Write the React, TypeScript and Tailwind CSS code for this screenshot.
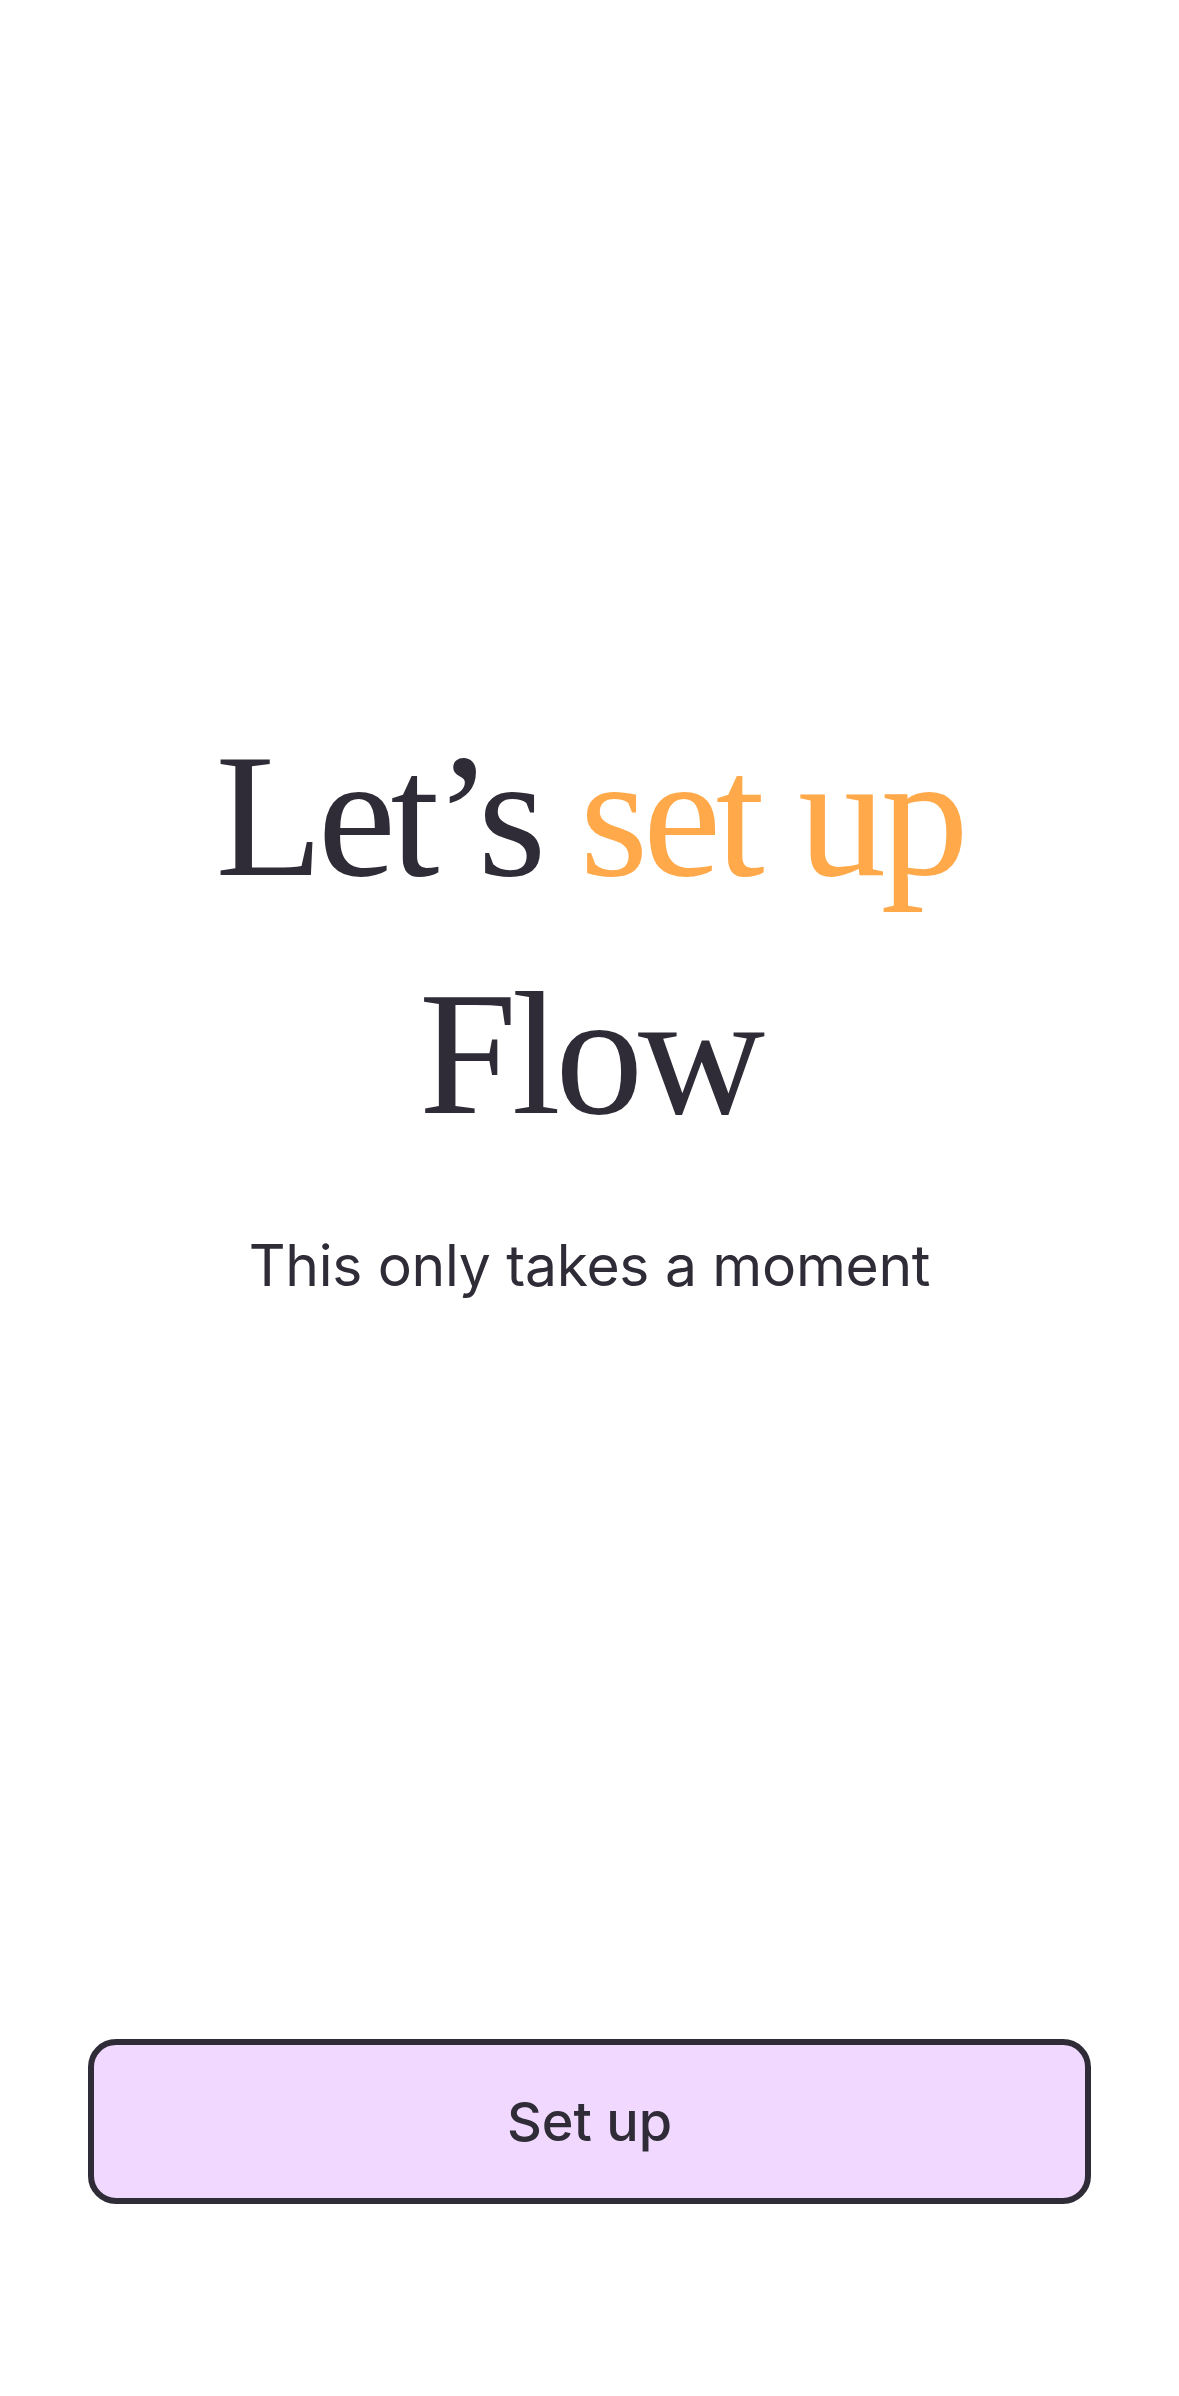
import React from 'react';

export default function App() {
  return (
    <div className="min-h-[2396px] w-full bg-white flex flex-col text-[#2f2c37]">
      <main className="flex-1 flex flex-col items-center pt-[697px]">
        <h1
          className="text-center text-[176px] leading-[238px] tracking-[-0.03em]"
          style={{ fontFamily: '"Liberation Serif", "DejaVu Serif", serif' }}
        >
          Let’s <span className="text-[#ffa94a]">set up</span>
          <br />
          Flow
        </h1>
        <p
          className="mt-[58px] text-[57px] leading-[70px] tracking-[-0.005em] text-[#2f2c37]"
          style={{ fontFamily: 'Inter, "Noto Sans", sans-serif' }}
        >
          This only takes a moment
        </p>
      </main>

      <div className="px-[88px] pb-[192px]">
        <button
          className="w-full h-[165px] rounded-[28px] border-[6px] border-[#2f2c37] bg-[#f0d8ff] text-[54px] font-medium text-[#2f2c37]"
          style={{ fontFamily: 'Inter, "Noto Sans", sans-serif' }}
        >
          Set up
        </button>
      </div>
    </div>
  );
}
